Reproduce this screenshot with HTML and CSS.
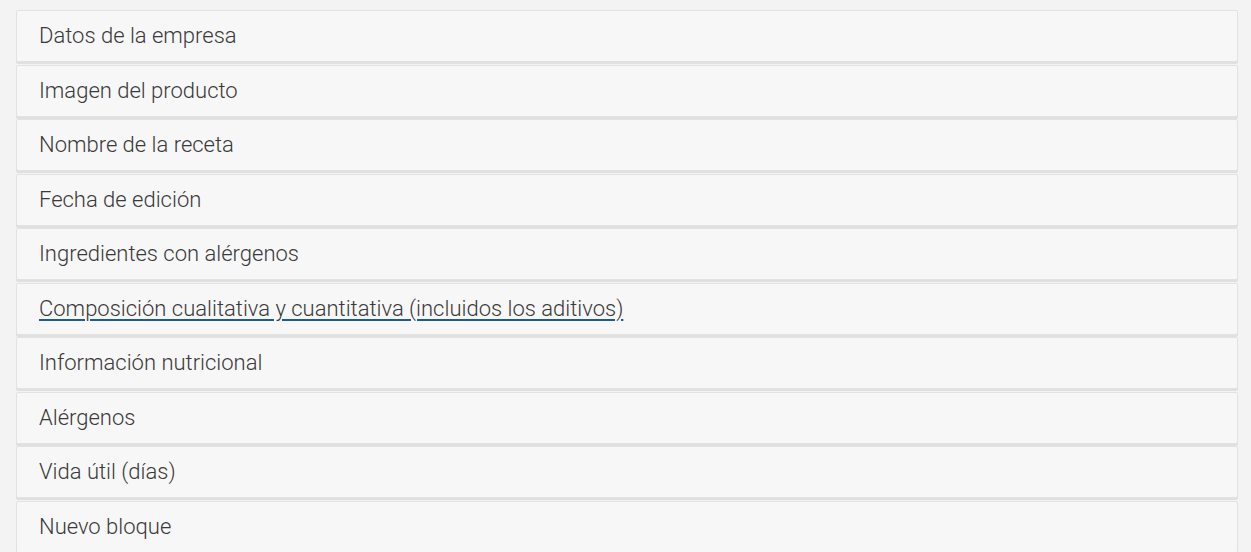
FILE: index.html
```html
<!DOCTYPE html>
<html>
<head>
    <title>Bloques</title>
    <link rel="stylesheet" href="styles.css">
</head>
<body>
    <div class="block-list">
        <div class="block">Datos de la empresa</div>
        <div class="block">Imagen del producto</div>
        <div class="block">Nombre de la receta</div>
        <div class="block">Fecha de edición</div>
        <div class="block">Ingredientes con alérgenos</div>
        <div class="block"><a href="#" class="block-link">Composición cualitativa y cuantitativa (incluidos los aditivos)</a></div>
        <div class="block">Información nutricional</div>
        <div class="block">Alérgenos</div>
        <div class="block">Vida útil (días)</div>
        <div class="block">Nuevo bloque</div>
    </div>
</body>
</html>
```

FILE: styles.css
```css
body {
    font-family: Roboto, "Noto Sans", Arial, sans-serif;
    background-color: #f3f3f3;
    margin: 0;
    padding: 10px 13px 0 16px;
}

.block-list {
    display: flex;
    flex-direction: column;
    gap: 2.5px;
}

.block {
    background-color: #f7f7f7;
    border: 1px solid #e2e2e2;
    border-radius: 2px;
    box-shadow: 0 2px 0 #e0e0e0;
    padding: 12px 22px 12px;
    font-size: 22px;
    font-weight: 300;
    line-height: 26px;
    color: #3a3a3a;
}

.block-link {
    color: #3a3a3a;
    text-decoration: underline;
    text-decoration-color: #1c5b94;
    text-decoration-thickness: 2px;
    text-underline-offset: 3px;
}
```
